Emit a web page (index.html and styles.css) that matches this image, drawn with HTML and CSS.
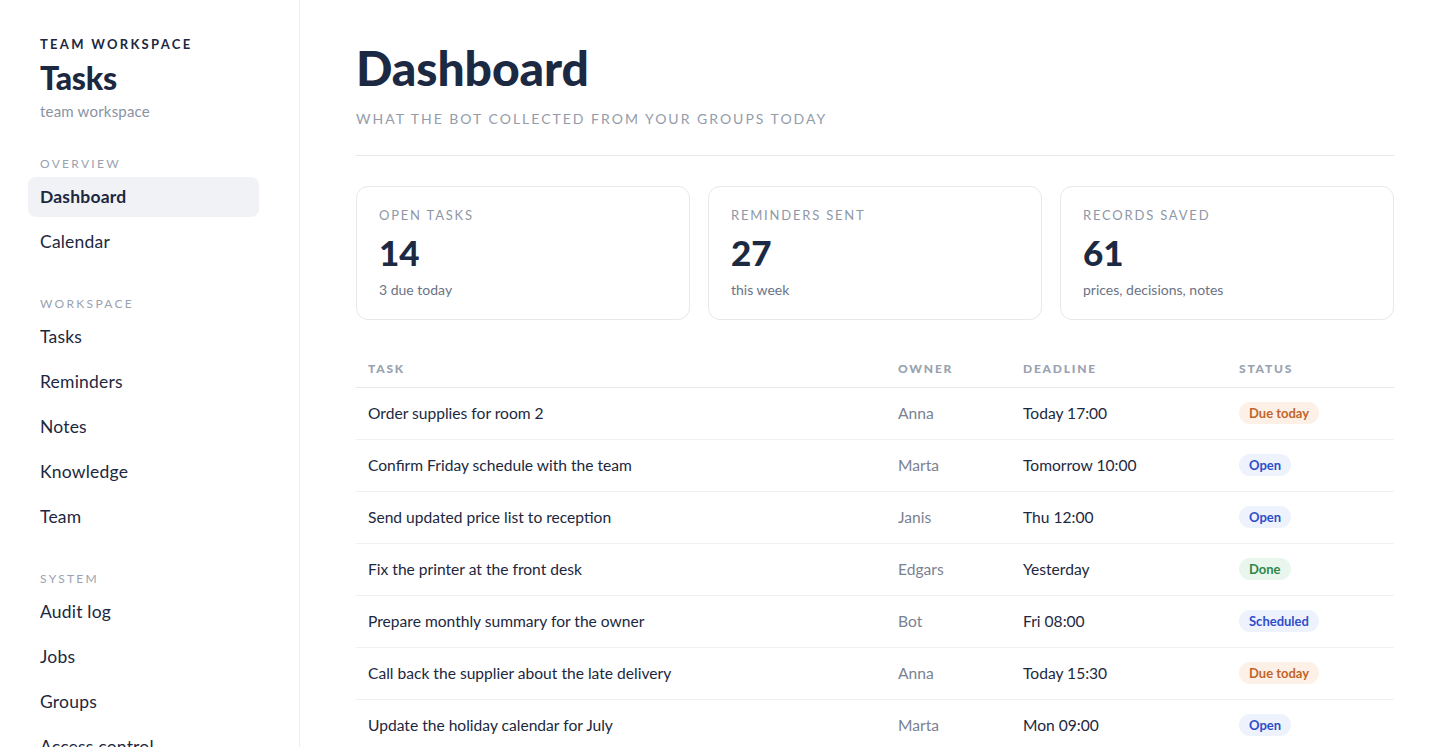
FILE: index.html
```html
<!DOCTYPE html>
<html lang="en">
<head>
<meta charset="utf-8">
<title>Dashboard · Tasks</title>
<link rel="stylesheet" href="styles.css">
</head>
<body>
<div class="app">
  <aside class="sidebar">
    <div class="brand">
      <div class="brand-kicker">Team workspace</div>
      <div class="brand-title">Tasks</div>
      <div class="brand-sub">team workspace</div>
    </div>

    <nav class="nav">
      <div class="nav-group">
        <div class="nav-label">Overview</div>
        <a class="nav-item active" href="#">Dashboard</a>
        <a class="nav-item" href="#">Calendar</a>
      </div>
      <div class="nav-group">
        <div class="nav-label">Workspace</div>
        <a class="nav-item" href="#">Tasks</a>
        <a class="nav-item" href="#">Reminders</a>
        <a class="nav-item" href="#">Notes</a>
        <a class="nav-item" href="#">Knowledge</a>
        <a class="nav-item" href="#">Team</a>
      </div>
      <div class="nav-group">
        <div class="nav-label">System</div>
        <a class="nav-item" href="#">Audit log</a>
        <a class="nav-item" href="#">Jobs</a>
        <a class="nav-item" href="#">Groups</a>
        <a class="nav-item" href="#">Access control</a>
      </div>
    </nav>
  </aside>

  <main class="main">
    <header class="page-head">
      <h1 class="page-title">Dashboard</h1>
      <p class="page-sub">What the bot collected from your groups today</p>
    </header>

    <section class="stats">
      <div class="stat">
        <div class="stat-label">Open tasks</div>
        <div class="stat-value">14</div>
        <div class="stat-note">3 due today</div>
      </div>
      <div class="stat">
        <div class="stat-label">Reminders sent</div>
        <div class="stat-value">27</div>
        <div class="stat-note">this week</div>
      </div>
      <div class="stat">
        <div class="stat-label">Records saved</div>
        <div class="stat-value">61</div>
        <div class="stat-note">prices, decisions, notes</div>
      </div>
    </section>

    <table class="tasks">
      <colgroup>
        <col class="col-task">
        <col class="col-owner">
        <col class="col-deadline">
        <col class="col-status">
      </colgroup>
      <thead>
        <tr>
          <th>Task</th>
          <th>Owner</th>
          <th>Deadline</th>
          <th>Status</th>
        </tr>
      </thead>
      <tbody>
        <tr>
          <td>Order supplies for room 2</td>
          <td class="owner">Anna</td>
          <td>Today 17:00</td>
          <td><span class="badge due">Due today</span></td>
        </tr>
        <tr>
          <td>Confirm Friday schedule with the team</td>
          <td class="owner">Marta</td>
          <td>Tomorrow 10:00</td>
          <td><span class="badge open">Open</span></td>
        </tr>
        <tr>
          <td>Send updated price list to reception</td>
          <td class="owner">Janis</td>
          <td>Thu 12:00</td>
          <td><span class="badge open">Open</span></td>
        </tr>
        <tr>
          <td>Fix the printer at the front desk</td>
          <td class="owner">Edgars</td>
          <td>Yesterday</td>
          <td><span class="badge done">Done</span></td>
        </tr>
        <tr>
          <td>Prepare monthly summary for the owner</td>
          <td class="owner">Bot</td>
          <td>Fri 08:00</td>
          <td><span class="badge open">Scheduled</span></td>
        </tr>
        <tr>
          <td>Call back the supplier about the late delivery</td>
          <td class="owner">Anna</td>
          <td>Today 15:30</td>
          <td><span class="badge due">Due today</span></td>
        </tr>
        <tr>
          <td>Update the holiday calendar for July</td>
          <td class="owner">Marta</td>
          <td>Mon 09:00</td>
          <td><span class="badge open">Open</span></td>
        </tr>
      </tbody>
    </table>
  </main>
</div>
</body>
</html>
```

FILE: styles.css
```css
* {
  box-sizing: border-box;
}

html, body {
  margin: 0;
  padding: 0;
  height: 100%;
}

body {
  font-family: "Lato", "Noto Sans", sans-serif;
  color: #1c2840;
  background: #ffffff;
  overflow: hidden;
}

.app {
  display: flex;
  min-height: 100vh;
}

/* ---------- sidebar ---------- */

.sidebar {
  flex: 0 0 300px;
  border-right: 1px solid #eceef2;
  padding: 36px 40px 0 28px;
}

.brand {
  padding-left: 12px;
}

.brand-kicker {
  font-size: 13px;
  font-weight: 700;
  letter-spacing: 2.3px;
  text-transform: uppercase;
  color: #1c2840;
  line-height: 16px;
}

.brand-title {
  font-size: 32px;
  font-weight: 900;
  line-height: 40px;
  margin-top: 6px;
  letter-spacing: -0.2px;
}

.brand-sub {
  font-size: 15px;
  color: #8a93a3;
  line-height: 20px;
  margin-top: 3px;
  letter-spacing: 0.2px;
}

.nav {
  margin-top: 35px;
  display: flex;
  flex-direction: column;
  gap: 34px;
}

.nav-group {
  display: flex;
  flex-direction: column;
  gap: 5px;
}

.nav-label {
  padding-left: 12px;
  font-size: 12px;
  letter-spacing: 2.3px;
  text-transform: uppercase;
  color: #9aa2b1;
  line-height: 16px;
}

.nav-item {
  display: flex;
  align-items: center;
  height: 40px;
  padding: 0 12px 2px;
  border-radius: 8px;
  font-size: 17.5px;
  letter-spacing: 0.2px;
  color: #1c2840;
  text-decoration: none;
}

.nav-item.active {
  background: #f1f2f6;
  font-weight: 700;
}

/* ---------- main ---------- */

.main {
  flex: 1;
  padding: 42px 56px 0 56px;
  min-width: 0;
}

.page-head {
  border-bottom: 1px solid #e6e8ec;
  padding-bottom: 27px;
}

.page-title {
  margin: 0;
  font-size: 48px;
  font-weight: 900;
  line-height: 52px;
  color: #1b2942;
  letter-spacing: -0.1px;
}

.page-sub {
  margin: 16px 0 0;
  font-size: 14px;
  letter-spacing: 2px;
  text-transform: uppercase;
  color: #949cab;
  line-height: 18px;
}

.stats {
  display: grid;
  grid-template-columns: repeat(3, 1fr);
  gap: 18px;
  margin-top: 30px;
}

.stat {
  border: 1px solid #e6e8ec;
  border-radius: 12px;
  height: 134px;
  padding: 20px 22px 0;
}

.stat-label {
  font-size: 13px;
  letter-spacing: 1.8px;
  text-transform: uppercase;
  color: #8f97a6;
  line-height: 16px;
}

.stat-value {
  font-size: 35px;
  font-weight: 900;
  line-height: 40px;
  margin-top: 9px;
  color: #1b2942;
}

.stat-note {
  font-size: 14px;
  color: #6b7385;
  line-height: 18px;
  margin-top: 9px;
}

/* ---------- table ---------- */

.tasks {
  width: 100%;
  border-collapse: collapse;
  margin-top: 30px;
  table-layout: fixed;
}

.col-task { width: 530px; }
.col-owner { width: 125px; }
.col-deadline { width: 216px; }
.col-status { width: auto; }

.tasks th {
  text-align: left;
  font-size: 12px;
  font-weight: 900;
  letter-spacing: 1.8px;
  text-transform: uppercase;
  color: #9aa2b1;
  padding: 0 12px;
  height: 37px;
  border-bottom: 1px solid #e6e8ec;
}

.tasks td {
  height: 52px;
  padding: 0 12px;
  font-size: 15.6px;
  color: #1c2840;
  border-bottom: 1px solid #eef0f3;
  white-space: nowrap;
}

.tasks td.owner {
  color: #7a8292;
}

.badge {
  display: inline-block;
  font-size: 13px;
  font-weight: 700;
  line-height: 22px;
  padding: 0 10px;
  border-radius: 11px;
  vertical-align: middle;
}

.badge.due {
  background: #fdf1e7;
  color: #c1652b;
}

.badge.open {
  background: #eef2fc;
  color: #2f4ecb;
}

.badge.done {
  background: #e9f6ed;
  color: #2f8748;
}
```
